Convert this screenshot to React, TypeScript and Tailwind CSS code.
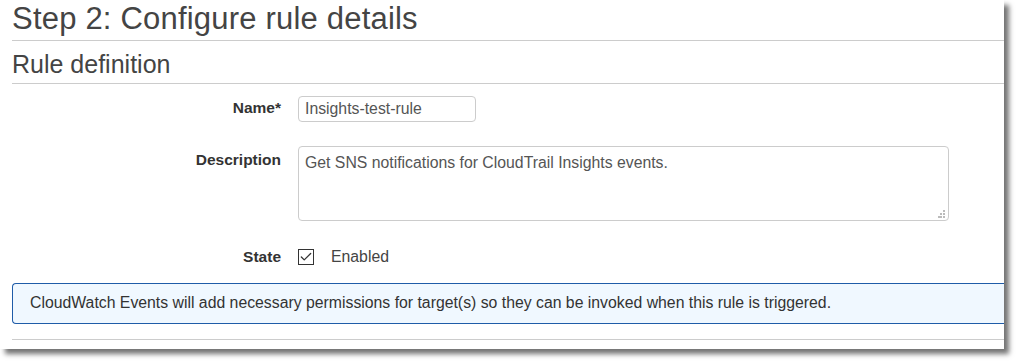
import { Check } from "lucide-react";

const font = "font-['Liberation_Sans',Arial,sans-serif]";

function Field({
  label,
  children,
  className = "",
}: {
  label: string;
  children: React.ReactNode;
  className?: string;
}) {
  return (
    <div className={`flex items-start ${className}`}>
      <div className="w-[281px] shrink-0 text-right text-[15.5px] font-bold text-[#333]">
        {label}
      </div>
      <div className="ml-[17px] flex-1">{children}</div>
    </div>
  );
}

export default function App() {
  return (
    <div className={`h-[364px] w-[1019px] bg-white ${font}`}>
      <div className="h-[349px] w-[1004px] overflow-hidden bg-white shadow-[5px_5px_5px_rgba(0,0,0,0.55)]">
        <h1 className="pl-3 pt-[1px] text-[31px] leading-[36px] tracking-[0.2px] text-[#444]">
          Step 2: Configure rule details
        </h1>
        <div className="ml-3 mt-[3px] border-t border-[#ccc]" />
        <h2 className="pl-3 pt-[8px] text-[25px] leading-[30px] text-[#444]">
          Rule definition
        </h2>
        <div className="ml-3 mt-[4px] border-t border-[#ccc]" />

        <Field label="Name*" className="mt-[12px]">
          <div className="h-[26px] w-[178px] rounded-[4px] border border-[#ccc] px-[6px] text-[15.8px] leading-[24px] text-[#555]">
            Insights-test-rule
          </div>
        </Field>
        <div className="h-[24px]" />
        <Field label="Description" className="pt-[2px]">
          <div className="relative -mt-[2px] h-[75px] w-[651px] rounded-[4px] border border-[#ccc] px-[6px] pt-[6px] text-[15.8px] leading-[20px] text-[#555]">
            Get SNS notifications for CloudTrail Insights events.
            <svg
              className="absolute bottom-[2px] right-[2px]"
              width="8"
              height="8"
              viewBox="0 0 8 8"
              fill="#bbb"
            >
              <rect x="5" y="0" width="2" height="2" />
              <rect x="2" y="3" width="2" height="2" />
              <rect x="5" y="3" width="2" height="2" />
              <rect x="0" y="6" width="2" height="2" />
              <rect x="2" y="6" width="2" height="2" />
              <rect x="5" y="6" width="2" height="2" />
            </svg>
          </div>
        </Field>
        <Field label="State" className="mt-[24px] items-center">
          <div className="flex items-center">
            <span className="flex h-[16px] w-[16px] items-center justify-center border border-[#333] bg-white">
              <Check size={14} strokeWidth={2.2} className="text-[#333]" />
            </span>
            <span className="ml-[17px] text-[15.8px] text-[#444]">Enabled</span>
          </div>
        </Field>

        <div className="ml-3 mt-[14px] h-[41px] rounded-l-[4px] border border-r-0 border-[#1f5ca8] bg-[#f0f8ff] pl-[17px] text-[15.8px] leading-[38px] text-[#333]">
          CloudWatch Events will add necessary permissions for target(s) so they can be invoked when this rule is triggered.
        </div>
        <div className="ml-3 mt-[15px] border-t border-[#ccc]" />
      </div>
    </div>
  );
}
